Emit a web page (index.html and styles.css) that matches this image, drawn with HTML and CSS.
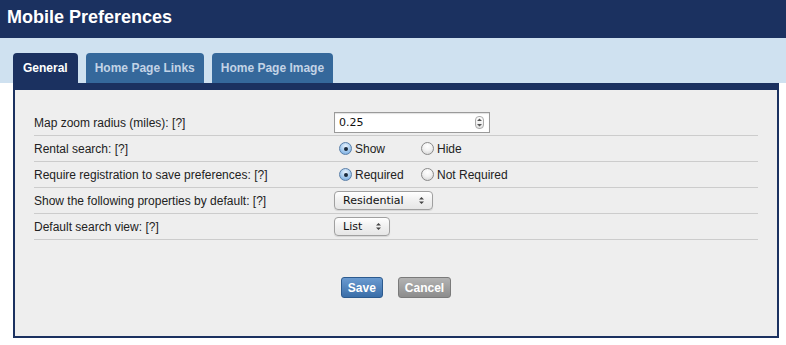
FILE: index.html
```html
<!DOCTYPE html>
<html lang="en">

<head>
    <meta charset="UTF-8" />
    <title>Mobile Preferences</title>
    <link rel="stylesheet" href="styles.css">
</head>

<body>
    <header class="top-bar">
        <h1>Mobile Preferences</h1>
    </header>

    <nav class="tab-band">
        <a class="tab active" href="#">General</a>
        <a class="tab" href="#">Home Page Links</a>
        <a class="tab" href="#">Home Page Image</a>
    </nav>

    <div class="panel">
        <div class="pref-list">
            <div class="row">
                <span class="label">Map zoom radius (miles): <a href="#">[?]</a></span>
                <div class="number-box">
                    <input type="text" value="0.25">
                    <span class="spinner">
                        <svg width="7" height="11" viewBox="0 0 7 11">
                            <path d="M1 4 L3.5 1.5 L6 4 Z M1 7 L3.5 9.5 L6 7 Z" fill="#555" />
                        </svg>
                    </span>
                </div>
            </div>
            <div class="row">
                <span class="label">Rental search: <a href="#">[?]</a></span>
                <label class="choice"><input type="radio" name="rental" checked>Show</label>
                <label class="choice"><input type="radio" name="rental">Hide</label>
            </div>
            <div class="row">
                <span class="label">Require registration to save preferences: <a href="#">[?]</a></span>
                <label class="choice"><input type="radio" name="reg" checked>Required</label>
                <label class="choice"><input type="radio" name="reg">Not Required</label>
            </div>
            <div class="row">
                <span class="label">Show the following properties by default: <a href="#">[?]</a></span>
                <div class="select wide">
                    <span>Residential</span>
                    <svg width="7" height="9" viewBox="0 0 7 9">
                        <path d="M1 3.5 L3.5 1 L6 3.5 Z M1 5.5 L3.5 8 L6 5.5 Z" fill="#444" />
                    </svg>
                </div>
            </div>
            <div class="row">
                <span class="label">Default search view: <a href="#">[?]</a></span>
                <div class="select narrow">
                    <span>List</span>
                    <svg width="7" height="9" viewBox="0 0 7 9">
                        <path d="M1 3.5 L3.5 1 L6 3.5 Z M1 5.5 L3.5 8 L6 5.5 Z" fill="#444" />
                    </svg>
                </div>
            </div>
        </div>

        <div class="actions">
            <button class="btn save">Save</button>
            <button class="btn cancel">Cancel</button>
        </div>
    </div>
</body>

</html>
```

FILE: styles.css
```css
body {
    margin: 0;
    font-family: "Liberation Sans", Arial, sans-serif;
    background: #fff;
    color: #222;
}

.top-bar {
    height: 38px;
    background: #1b3160;
    padding-left: 7px;
    display: flex;
    align-items: center;
}

.top-bar h1 {
    margin: 0;
    font-size: 18px;
    font-weight: bold;
    color: #fff;
    position: relative;
    top: -2px;
}

.tab-band {
    height: 45px;
    background: #cfe1f0;
    padding-left: 13px;
    display: flex;
    align-items: flex-end;
    gap: 8px;
}

.tab {
    height: 30px;
    padding: 0 9px;
    display: flex;
    align-items: center;
    background: #35689b;
    color: #c3d3e6;
    font-size: 12px;
    font-weight: bold;
    text-decoration: none;
    border-radius: 4px 4px 0 0;
}

.tab.active {
    background: #1b3160;
    color: #fff;
    padding: 0 10px;
}

.panel {
    box-sizing: border-box;
    margin: 0 7px 0 13px;
    height: 255px;
    background: #eeeeee;
    border: 2px solid #1b3160;
    border-top-width: 7px;
    padding: 20px 19px 0;
}

.row {
    height: 25px;
    border-bottom: 1px solid #cccccc;
    display: flex;
    align-items: center;
    font-size: 12px;
}

.label {
    width: 300px;
    flex-shrink: 0;
}

.label a {
    color: #222;
    text-decoration: none;
}

.number-box {
    width: 154px;
    height: 19px;
    border: 1px solid #9a9a9a;
    background: #fff;
    display: flex;
    align-items: center;
    box-shadow: inset 0 1px 1px rgba(0, 0, 0, 0.12);
}

.number-box input {
    border: none;
    outline: none;
    background: transparent;
    width: 130px;
    padding: 0 0 0 4px;
    font-family: "DejaVu Sans", sans-serif;
    font-size: 11px;
    color: #111;
}

.spinner {
    margin-left: auto;
    margin-right: 5px;
    width: 7px;
    height: 11px;
    border: 1px solid #aaa;
    border-radius: 4px;
    display: flex;
    background: linear-gradient(#fff, #e4e4e4);
}

.choice {
    display: flex;
    align-items: center;
    white-space: nowrap;
}

.choice:first-of-type {
    width: 82px;
    margin-left: 5px;
}

.choice input {
    appearance: none;
    -webkit-appearance: none;
    width: 13px;
    height: 13px;
    margin: 0 3px 0 0;
    border-radius: 50%;
    border: 1px solid #8a8a8a;
    background: radial-gradient(circle at 50% 30%, #fff 0, #f2f2f2 45%, #cfcfcf 100%);
    box-sizing: border-box;
    display: flex;
    align-items: center;
    justify-content: center;
}

.choice input:checked {
    border-color: #5a7fa8;
    background: radial-gradient(circle at 50% 30%, #eaf3fd 0, #a9cdef 50%, #6ba2dc 100%);
}

.choice input:checked::after {
    content: "";
    width: 4px;
    height: 4px;
    border-radius: 50%;
    background: #1a2a3c;
}

.select {
    height: 17px;
    border: 1px solid #a0a0a0;
    border-radius: 4px;
    background: linear-gradient(#ffffff, #f0f0f0 50%, #e6e6e6);
    display: flex;
    align-items: center;
    justify-content: space-between;
    padding: 0 7px 0 8px;
    font-family: "DejaVu Sans", sans-serif;
    font-size: 11px;
    color: #111;
    box-shadow: 0 1px 1px rgba(0, 0, 0, 0.1);
}

.select.wide {
    width: 82px;
}

.select.narrow {
    width: 39px;
}

.actions {
    display: flex;
    justify-content: center;
    gap: 15px;
    margin-top: 37px;
}

.btn {
    height: 21px;
    padding: 0 6px;
    border-radius: 3px;
    font-family: "Liberation Sans", Arial, sans-serif;
    font-size: 12px;
    font-weight: bold;
    color: #fff;
    cursor: pointer;
}

.btn.save {
    background: linear-gradient(#6a9ad0, #3a6ea8);
    border: 1px solid #2c5a8e;
}

.btn.cancel {
    background: linear-gradient(#b3b3b3, #8c8c8c);
    border: 1px solid #7a7a7a;
}
```
